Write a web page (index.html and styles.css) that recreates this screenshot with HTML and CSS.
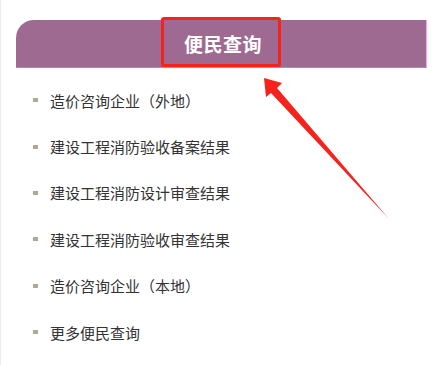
FILE: index.html
```html
<!DOCTYPE html>
<html lang="zh-CN">
<head>
    <meta charset="UTF-8">
    <meta name="viewport" content="width=device-width, initial-scale=1.0">
    <title>便民查询</title>
    <link rel="stylesheet" href="styles.css">
</head>
<body>
    <!-- 便民查询栏目 -->
    <div class="panel">
        <div class="panel-head">
            <h2 class="panel-title">便民查询</h2>
        </div>

        <ul class="query-list">
            <li>造价咨询企业（外地）</li>
            <li>建设工程消防验收备案结果</li>
            <li>建设工程消防设计审查结果</li>
            <li>建设工程消防验收审查结果</li>
            <li>造价咨询企业（本地）</li>
            <li>更多便民查询</li>
        </ul>
    </div>

    <!-- 标注：红框 + 箭头 -->
    <div class="mark-box"></div>
    <svg class="mark-arrow" width="444" height="365" viewBox="0 0 444 365">
        <polygon points="263,78 281,83 276,88 388,219 270,93 265,97" fill="#f5231b"/>
    </svg>
</body>
</html>
```

FILE: styles.css
```css
/* 全局样式 */
body, html {
    margin: 0;
    padding: 0;
    height: 100%;
    overflow: hidden;
    background: #fff;
    font-family: 'Noto Sans CJK SC', 'Noto Sans', sans-serif;
}

body {
    position: relative;
    border-left: 1px solid #ececec;
    box-sizing: border-box;
}

/* 栏目 */
.panel {
    padding: 20px 0 0 15px;
}

.panel-head {
    width: 411px;
    height: 48px;
    background: #9e6a91;
    border-top-left-radius: 18px;
    border-right: 1px solid #f2a6ef;
    border-bottom: 1px solid #b58aab;
    box-sizing: border-box;
    display: flex;
    align-items: center;
    justify-content: center;
}

.panel-title {
    margin: 0;
    padding-left: 4px;
    font-size: 19px;
    font-weight: bold;
    color: #fff;
    letter-spacing: 0.5px;
}

/* 列表 */
.query-list {
    list-style: none;
    margin: 0;
    padding: 9px 0 0 17px;
}

.query-list li {
    height: 46.4px;
    display: flex;
    align-items: center;
    font-size: 15px;
    color: #333;
}

.query-list li::before {
    content: '';
    width: 5px;
    height: 4px;
    background: #b4a693;
    margin-right: 12px;
}

/* 红框标注 */
.mark-box {
    position: absolute;
    left: 160px;
    top: 17px;
    width: 120px;
    height: 50px;
    border: 3px solid #f5231b;
    border-radius: 3px;
    box-sizing: border-box;
}

.mark-arrow {
    position: absolute;
    left: 0;
    top: 0;
}
```
